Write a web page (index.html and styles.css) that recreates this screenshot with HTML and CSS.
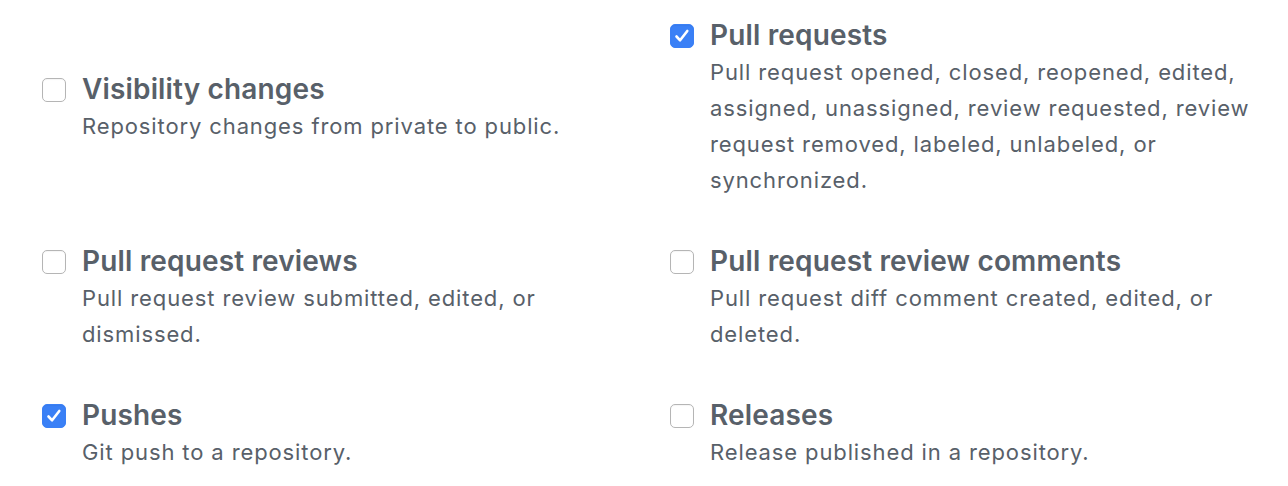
FILE: index.html
```html
<!DOCTYPE html>
<html>
<head>
<meta charset="utf-8">
<link rel="stylesheet" href="styles.css">
</head>
<body>
<div class="events">
  <label class="event">
    <span class="box"></span>
    <span class="text">
      <span class="title">Visibility changes</span>
      <span class="desc">Repository changes from private to public.</span>
    </span>
  </label>
  <label class="event">
    <span class="box checked"><svg viewBox="0 0 24 24" width="24" height="24"><path d="M6.5 12.5l3.6 3.8 7.2-9.3" fill="none" stroke="#fff" stroke-width="2.6" stroke-linecap="round" stroke-linejoin="round"/></svg></span>
    <span class="text">
      <span class="title">Pull requests</span>
      <span class="desc">Pull request opened, closed, reopened, edited, assigned, unassigned, review requested, review request removed, labeled, unlabeled, or synchronized.</span>
    </span>
  </label>
  <label class="event">
    <span class="box"></span>
    <span class="text">
      <span class="title">Pull request reviews</span>
      <span class="desc">Pull request review submitted, edited, or dismissed.</span>
    </span>
  </label>
  <label class="event">
    <span class="box"></span>
    <span class="text">
      <span class="title">Pull request review comments</span>
      <span class="desc">Pull request diff comment created, edited, or deleted.</span>
    </span>
  </label>
  <label class="event">
    <span class="box checked"><svg viewBox="0 0 24 24" width="24" height="24"><path d="M6.5 12.5l3.6 3.8 7.2-9.3" fill="none" stroke="#fff" stroke-width="2.6" stroke-linecap="round" stroke-linejoin="round"/></svg></span>
    <span class="text">
      <span class="title">Pushes</span>
      <span class="desc">Git push to a repository.</span>
    </span>
  </label>
  <label class="event">
    <span class="box"></span>
    <span class="text">
      <span class="title">Releases</span>
      <span class="desc">Release published in a repository.</span>
    </span>
  </label>
</div>
</body>
</html>
```

FILE: styles.css
```css
html, body {
  margin: 0;
  padding: 0;
  background: #fff;
}
body {
  font-family: Inter, "Liberation Sans", sans-serif;
  color: #586069;
}
.events {
  display: grid;
  grid-template-columns: 628px 628px;
  column-gap: 0;
  row-gap: 45px;
  align-items: center;
  padding: 17px 0 0 42px;
}
.event {
  display: flex;
  align-items: flex-start;
  gap: 16px;
}
.box {
  flex: none;
  width: 24px;
  height: 24px;
  box-sizing: border-box;
  border: 1px solid #b5b5b5;
  border-radius: 5px;
  background: #fff;
  margin-top: 7px;
  box-shadow: inset 0 1px 1px rgba(0,0,0,0.04);
}
.box.checked {
  background: #3a80f6;
  border-color: #3a80f6;
  position: relative;
}
.box.checked svg {
  position: absolute;
  left: -1px;
  top: -1px;
}
.text {
  display: flex;
  flex-direction: column;
  width: 560px;
}
.title {
  font-size: 28px;
  font-weight: 600;
  line-height: 36px;
  letter-spacing: 0.15px;
  margin-bottom: 1px;
}
.desc {
  font-size: 22px;
  line-height: 36px;
  letter-spacing: 0.88px;
}
```
